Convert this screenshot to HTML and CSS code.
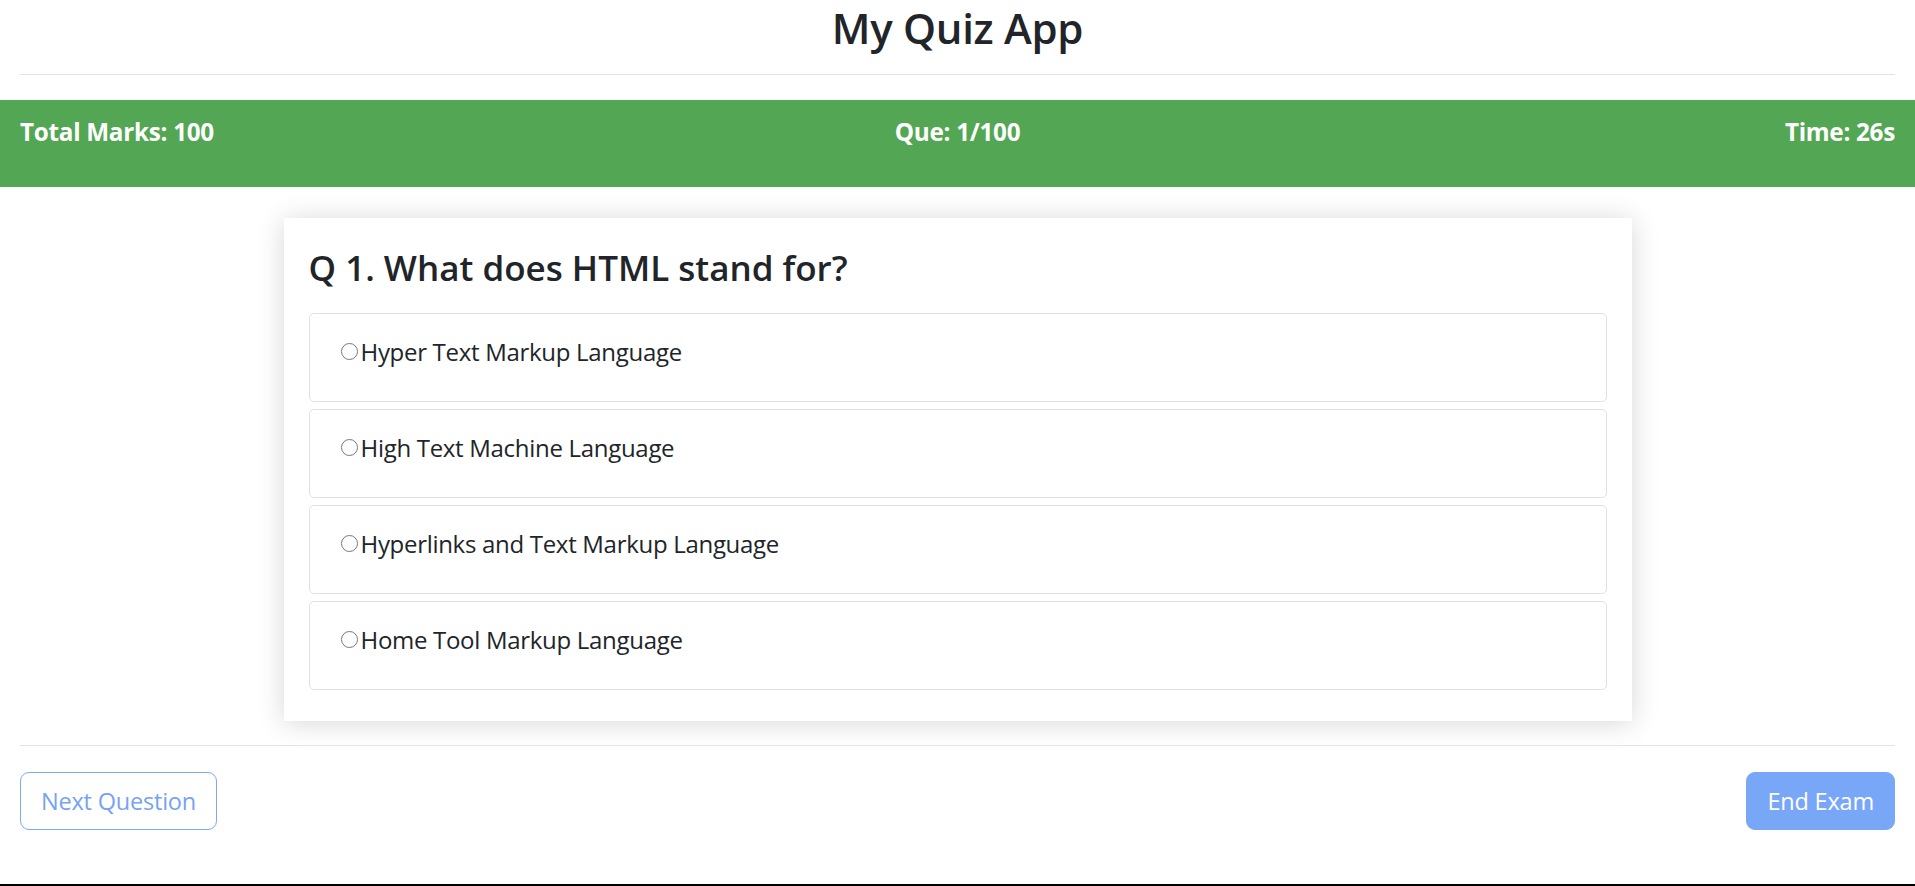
FILE: index.html
```html
<!DOCTYPE html>
<html lang="en">
<head>
<meta charset="utf-8">
<title>My Quiz App</title>
<link rel="stylesheet" href="styles.css">
</head>
<body>
  <header class="top">
    <h1 class="title">My Quiz App</h1>
    <hr class="rule rule-top">
  </header>

  <div class="status">
    <div class="status-left">Total Marks: 100</div>
    <div class="status-mid">Que: 1/100</div>
    <div class="status-right">Time: 26s</div>
  </div>

  <main class="card">
    <h3 class="question">Q 1. What does HTML stand for?</h3>
    <div class="options">
      <label class="option"><input class="radio" type="radio" name="q1"><span>Hyper Text Markup Language</span></label>
      <label class="option"><input class="radio" type="radio" name="q1"><span>High Text Machine Language</span></label>
      <label class="option"><input class="radio" type="radio" name="q1"><span>Hyperlinks and Text Markup Language</span></label>
      <label class="option"><input class="radio" type="radio" name="q1"><span>Home Tool Markup Language</span></label>
    </div>
  </main>

  <section class="bottom">
    <hr class="rule rule-bottom">
    <div class="actions">
      <button class="btn btn-outline" type="button">Next Question</button>
      <button class="btn btn-solid" type="button">End Exam</button>
    </div>
  </section>

  <div class="footer-line"></div>
</body>
</html>
```

FILE: styles.css
```css
* { box-sizing: border-box; }

html {
  overflow: hidden;
}

html, body {
  margin: 0;
  padding: 0;
}

body {
  font-family: "Open Sans", "Noto Sans", "Liberation Sans", sans-serif;
  color: #212529;
  background: #ffffff;
}

.top {
  padding: 0 20px;
}

.title {
  margin: 0;
  padding-top: 2px;
  text-align: center;
  font-size: 42px;
  font-weight: 600;
  line-height: 52px;
  letter-spacing: -0.3px;
}

.rule {
  border: 0;
  border-top: 1px solid #e2e3e5;
  margin: 0;
}

.rule-top {
  margin-top: 20px;
  margin-bottom: 25px;
}

.status {
  display: grid;
  grid-template-columns: 1fr auto 1fr;
  align-items: start;
  height: 87px;
  padding: 17px 20px 0;
  background: #53a653;
  color: #ffffff;
  font-weight: 700;
  font-size: 24.3px;
  line-height: 29px;
  letter-spacing: -0.3px;
}

.status-left { justify-self: start; }
.status-mid { justify-self: center; }
.status-right { justify-self: end; }

.card {
  width: 1348px;
  margin: 31px auto 0;
  padding: 25px 25px 31px;
  background: #ffffff;
  box-shadow: 0 2px 26px rgba(0, 0, 0, 0.16);
}

.question {
  margin: 4px 0 24px;
  font-size: 35px;
  font-weight: 600;
  line-height: 42px;
  letter-spacing: 0;
}

.options {
  display: flex;
  flex-direction: column;
  gap: 7px;
}

.option {
  display: flex;
  align-items: flex-start;
  height: 89px;
  padding: 20px 31px 0;
  border: 1px solid #dee2e6;
  border-radius: 5px;
  font-size: 24px;
  line-height: 36px;
  letter-spacing: -0.3px;
  cursor: pointer;
}

.radio {
  appearance: none;
  -webkit-appearance: none;
  width: 17px;
  height: 17px;
  margin: 9px 3px 0 0;
  border: 1.5px solid #767676;
  border-radius: 50%;
  background: #ffffff;
  flex: none;
}

.bottom {
  padding: 0 20px;
}

.rule-bottom {
  margin-top: 24px;
}

.actions {
  display: flex;
  justify-content: space-between;
  margin-top: 26px;
}

.btn {
  height: 58px;
  padding: 0 20px;
  border-radius: 9px;
  font-family: "Open Sans", "Noto Sans", "Liberation Sans", sans-serif;
  font-size: 23.5px;
  line-height: 56px;
  letter-spacing: -0.2px;
  cursor: pointer;
}

.btn-outline {
  background: #ffffff;
  color: #76a3f3;
  border: 1px solid #7ea9f2;
}

.btn-solid {
  background: #79a7f7;
  color: #ffffff;
  border: 1px solid #79a7f7;
}

.footer-line {
  margin-top: 54px;
  border-top: 2px solid #000000;
}
```
